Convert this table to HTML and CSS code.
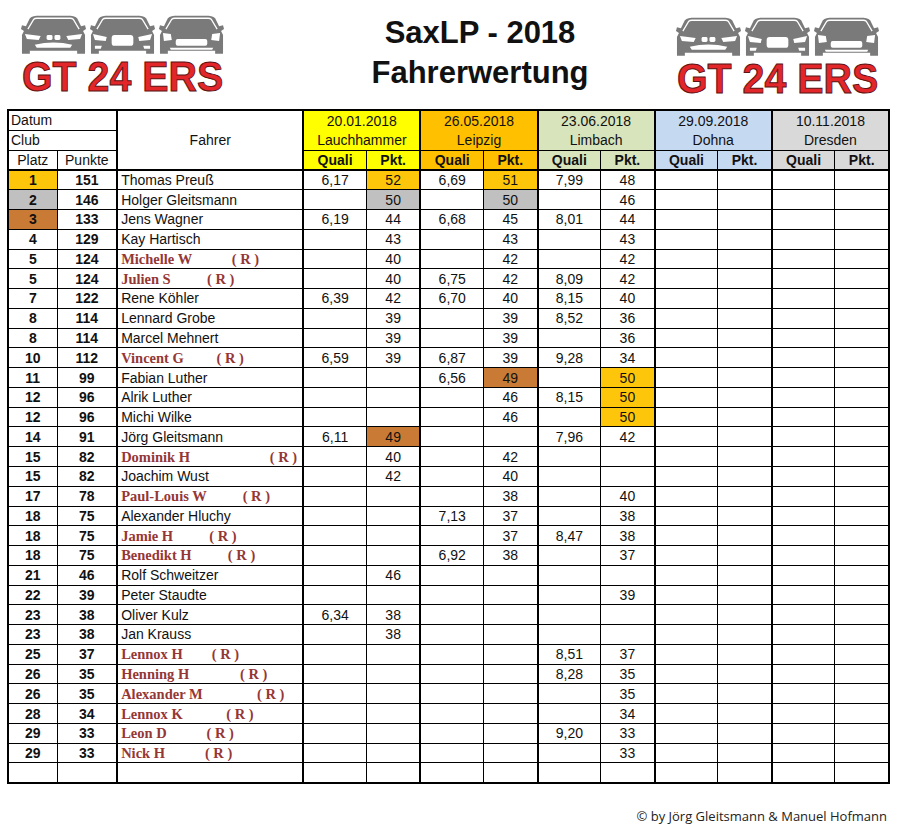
FILE: index.html
```html
<!DOCTYPE html>
<html lang="de">
<head>
<meta charset="utf-8">
<title>SaxLP - 2018 Fahrerwertung</title>
<link rel="stylesheet" href="styles.css">
</head>
<body>
<header class="top">
  <div class="logo">
    <div class="cars">
      <svg class="car" viewBox="0 0 68 40"><path class="body" d="M10,3 C12,1 15,0.5 20,0.5 L48,0.5 C53,0.5 56,1 58,3 L62,11 L66,10 L67,14 L64,16 L66,20 L66,39 L58,39 L58,36 L10,36 L10,39 L2,39 L2,20 L4,16 L1,14 L2,10 L6,11 Z"/><path class="line" d="M8,14 L14,4 Q15,3 17,3 L51,3 Q53,3 54,4 L60,14"/><path class="fill" d="M5,19 L21,21 L19,25 L7,24 Z M63,19 L47,21 L49,25 L61,24 Z"/><rect class="fill" x="27" y="20" width="6" height="5" rx="1.5"/><rect class="fill" x="35" y="20" width="6" height="5" rx="1.5"/><path class="fill" d="M15,30 Q34,25 53,30 L51,33 L17,33 Z"/></svg>
      <svg class="car" viewBox="0 0 68 40"><path class="body" d="M10,3 C12,1 15,0.5 20,0.5 L48,0.5 C53,0.5 56,1 58,3 L62,11 L66,10 L67,14 L64,16 L66,20 L66,39 L58,39 L58,36 L10,36 L10,39 L2,39 L2,20 L4,16 L1,14 L2,10 L6,11 Z"/><path class="line" d="M8,14 L14,4 Q15,3 17,3 L51,3 Q53,3 54,4 L60,14"/><path class="fill" d="M4,19 L18,22 L17,26 L6,25 Z M64,19 L50,22 L51,26 L62,25 Z"/><rect class="fill" x="23" y="20" width="22" height="11" rx="3"/><path class="fill" d="M6,31 L13,31 L12,34 L6,34 Z M62,31 L55,31 L56,34 L62,34 Z"/></svg>
      <svg class="car" viewBox="0 0 68 40"><path class="body" d="M10,3 C12,1 15,0.5 20,0.5 L48,0.5 C53,0.5 56,1 58,3 L62,11 L66,10 L67,14 L64,16 L66,20 L66,39 L58,39 L58,36 L10,36 L10,39 L2,39 L2,20 L4,16 L1,14 L2,10 L6,11 Z"/><path class="line" d="M8,14 L14,4 Q15,3 17,3 L51,3 Q53,3 54,4 L60,14"/><path class="fill" d="M5,18 L13,19 L14,25 L6,26 Z M63,18 L55,19 L54,25 L62,26 Z"/><rect class="fill" x="18" y="24" width="32" height="7" rx="2"/><path class="fill" d="M12,33 L56,33 L55,35 L13,35 Z"/></svg>
    </div>
    <div class="brand">GT 24 ERS</div>
  </div>
  <div class="title">
    <div>SaxLP - 2018</div>
    <div>Fahrerwertung</div>
  </div>
  <div class="logo logo-r">
    <div class="cars">
      <svg class="car" viewBox="0 0 68 40"><path class="body" d="M10,3 C12,1 15,0.5 20,0.5 L48,0.5 C53,0.5 56,1 58,3 L62,11 L66,10 L67,14 L64,16 L66,20 L66,39 L58,39 L58,36 L10,36 L10,39 L2,39 L2,20 L4,16 L1,14 L2,10 L6,11 Z"/><path class="line" d="M8,14 L14,4 Q15,3 17,3 L51,3 Q53,3 54,4 L60,14"/><path class="fill" d="M5,19 L21,21 L19,25 L7,24 Z M63,19 L47,21 L49,25 L61,24 Z"/><rect class="fill" x="27" y="20" width="6" height="5" rx="1.5"/><rect class="fill" x="35" y="20" width="6" height="5" rx="1.5"/><path class="fill" d="M15,30 Q34,25 53,30 L51,33 L17,33 Z"/></svg>
      <svg class="car" viewBox="0 0 68 40"><path class="body" d="M10,3 C12,1 15,0.5 20,0.5 L48,0.5 C53,0.5 56,1 58,3 L62,11 L66,10 L67,14 L64,16 L66,20 L66,39 L58,39 L58,36 L10,36 L10,39 L2,39 L2,20 L4,16 L1,14 L2,10 L6,11 Z"/><path class="line" d="M8,14 L14,4 Q15,3 17,3 L51,3 Q53,3 54,4 L60,14"/><path class="fill" d="M4,19 L18,22 L17,26 L6,25 Z M64,19 L50,22 L51,26 L62,25 Z"/><rect class="fill" x="23" y="20" width="22" height="11" rx="3"/><path class="fill" d="M6,31 L13,31 L12,34 L6,34 Z M62,31 L55,31 L56,34 L62,34 Z"/></svg>
      <svg class="car" viewBox="0 0 68 40"><path class="body" d="M10,3 C12,1 15,0.5 20,0.5 L48,0.5 C53,0.5 56,1 58,3 L62,11 L66,10 L67,14 L64,16 L66,20 L66,39 L58,39 L58,36 L10,36 L10,39 L2,39 L2,20 L4,16 L1,14 L2,10 L6,11 Z"/><path class="line" d="M8,14 L14,4 Q15,3 17,3 L51,3 Q53,3 54,4 L60,14"/><path class="fill" d="M5,18 L13,19 L14,25 L6,26 Z M63,18 L55,19 L54,25 L62,26 Z"/><rect class="fill" x="18" y="24" width="32" height="7" rx="2"/><path class="fill" d="M12,33 L56,33 L55,35 L13,35 Z"/></svg>
    </div>
    <div class="brand">GT 24 ERS</div>
  </div>
</header>

<table class="sheet">
  <colgroup>
    <col class="c-platz"><col class="c-punkte"><col class="c-name">
    <col class="c-q"><col class="c-p"><col class="c-q"><col class="c-p"><col class="c-q"><col class="c-p"><col class="c-q"><col class="c-p"><col class="c-q"><col class="c-p">
  </colgroup>
  <thead>
    <tr class="hr">
      <td colspan="2" class="lbl">Datum</td>
      <td rowspan="3" class="fahrer grp">Fahrer</td>
      <td colspan="2" class="ev1 grp d">20.01.2018</td>
      <td colspan="2" class="ev2 grp d">26.05.2018</td>
      <td colspan="2" class="ev3 grp d">23.06.2018</td>
      <td colspan="2" class="ev4 grp d">29.09.2018</td>
      <td colspan="2" class="ev5 grp d">10.11.2018</td>
    </tr>
    <tr class="hr">
      <td colspan="2" class="lbl">Club</td>
      <td colspan="2" class="ev1 grp c">Lauchhammer</td>
      <td colspan="2" class="ev2 grp c">Leipzig</td>
      <td colspan="2" class="ev3 grp c">Limbach</td>
      <td colspan="2" class="ev4 grp c">Dohna</td>
      <td colspan="2" class="ev5 grp c">Dresden</td>
    </tr>
    <tr class="hr last">
      <td>Platz</td>
      <td>Punkte</td>
      <td class="ev1 grp b">Quali</td><td class="ev1 b">Pkt.</td>
      <td class="ev2 grp b">Quali</td><td class="ev2 b">Pkt.</td>
      <td class="ev3 grp b">Quali</td><td class="ev3 b">Pkt.</td>
      <td class="ev4 grp b">Quali</td><td class="ev4 b">Pkt.</td>
      <td class="ev5 grp b">Quali</td><td class="ev5 b">Pkt.</td>
    </tr>
  </thead>
  <tbody>
    <tr><td class="gold">1</td><td>151</td><td>Thomas Preuß</td><td>6,17</td><td class="gold">52</td><td>6,69</td><td class="gold">51</td><td>7,99</td><td>48</td><td></td><td></td><td></td><td></td></tr>
    <tr><td class="silver">2</td><td>146</td><td>Holger Gleitsmann</td><td></td><td class="silver">50</td><td></td><td class="silver">50</td><td></td><td>46</td><td></td><td></td><td></td><td></td></tr>
    <tr><td class="bronze">3</td><td>133</td><td>Jens Wagner</td><td>6,19</td><td>44</td><td>6,68</td><td>45</td><td>8,01</td><td>44</td><td></td><td></td><td></td><td></td></tr>
    <tr><td>4</td><td>129</td><td>Kay Hartisch</td><td></td><td>43</td><td></td><td>43</td><td></td><td>43</td><td></td><td></td><td></td><td></td></tr>
    <tr><td>5</td><td>124</td><td><span class="rk">Michelle W           ( R )</span></td><td></td><td>40</td><td></td><td>42</td><td></td><td>42</td><td></td><td></td><td></td><td></td></tr>
    <tr><td>5</td><td>124</td><td><span class="rk">Julien S          ( R )</span></td><td></td><td>40</td><td>6,75</td><td>42</td><td>8,09</td><td>42</td><td></td><td></td><td></td><td></td></tr>
    <tr><td>7</td><td>122</td><td>Rene Köhler</td><td>6,39</td><td>42</td><td>6,70</td><td>40</td><td>8,15</td><td>40</td><td></td><td></td><td></td><td></td></tr>
    <tr><td>8</td><td>114</td><td>Lennard Grobe</td><td></td><td>39</td><td></td><td>39</td><td>8,52</td><td>36</td><td></td><td></td><td></td><td></td></tr>
    <tr><td>8</td><td>114</td><td>Marcel Mehnert</td><td></td><td>39</td><td></td><td>39</td><td></td><td>36</td><td></td><td></td><td></td><td></td></tr>
    <tr><td>10</td><td>112</td><td><span class="rk">Vincent G         ( R )</span></td><td>6,59</td><td>39</td><td>6,87</td><td>39</td><td>9,28</td><td>34</td><td></td><td></td><td></td><td></td></tr>
    <tr><td>11</td><td>99</td><td>Fabian Luther</td><td></td><td></td><td>6,56</td><td class="bronze">49</td><td></td><td class="gold">50</td><td></td><td></td><td></td><td></td></tr>
    <tr><td>12</td><td>96</td><td>Alrik Luther</td><td></td><td></td><td></td><td>46</td><td>8,15</td><td class="gold">50</td><td></td><td></td><td></td><td></td></tr>
    <tr><td>12</td><td>96</td><td>Michi Wilke</td><td></td><td></td><td></td><td>46</td><td></td><td class="gold">50</td><td></td><td></td><td></td><td></td></tr>
    <tr><td>14</td><td>91</td><td>Jörg Gleitsmann</td><td>6,11</td><td class="bronze">49</td><td></td><td></td><td>7,96</td><td>42</td><td></td><td></td><td></td><td></td></tr>
    <tr><td>15</td><td>82</td><td><span class="rk">Dominik H                      ( R )</span></td><td></td><td>40</td><td></td><td>42</td><td></td><td></td><td></td><td></td><td></td><td></td></tr>
    <tr><td>15</td><td>82</td><td>Joachim Wust</td><td></td><td>42</td><td></td><td>40</td><td></td><td></td><td></td><td></td><td></td><td></td></tr>
    <tr><td>17</td><td>78</td><td><span class="rk">Paul-Louis W          ( R )</span></td><td></td><td></td><td></td><td>38</td><td></td><td>40</td><td></td><td></td><td></td><td></td></tr>
    <tr><td>18</td><td>75</td><td>Alexander Hluchy</td><td></td><td></td><td>7,13</td><td>37</td><td></td><td>38</td><td></td><td></td><td></td><td></td></tr>
    <tr><td>18</td><td>75</td><td><span class="rk">Jamie H          ( R )</span></td><td></td><td></td><td></td><td>37</td><td>8,47</td><td>38</td><td></td><td></td><td></td><td></td></tr>
    <tr><td>18</td><td>75</td><td><span class="rk">Benedikt H          ( R )</span></td><td></td><td></td><td>6,92</td><td>38</td><td></td><td>37</td><td></td><td></td><td></td><td></td></tr>
    <tr><td>21</td><td>46</td><td>Rolf Schweitzer</td><td></td><td>46</td><td></td><td></td><td></td><td></td><td></td><td></td><td></td><td></td></tr>
    <tr><td>22</td><td>39</td><td>Peter Staudte</td><td></td><td></td><td></td><td></td><td></td><td>39</td><td></td><td></td><td></td><td></td></tr>
    <tr><td>23</td><td>38</td><td>Oliver Kulz</td><td>6,34</td><td>38</td><td></td><td></td><td></td><td></td><td></td><td></td><td></td><td></td></tr>
    <tr><td>23</td><td>38</td><td>Jan Krauss</td><td></td><td>38</td><td></td><td></td><td></td><td></td><td></td><td></td><td></td><td></td></tr>
    <tr><td>25</td><td>37</td><td><span class="rk">Lennox H        ( R )</span></td><td></td><td></td><td></td><td></td><td>8,51</td><td>37</td><td></td><td></td><td></td><td></td></tr>
    <tr><td>26</td><td>35</td><td><span class="rk">Henning H              ( R )</span></td><td></td><td></td><td></td><td></td><td>8,28</td><td>35</td><td></td><td></td><td></td><td></td></tr>
    <tr><td>26</td><td>35</td><td><span class="rk">Alexander M               ( R )</span></td><td></td><td></td><td></td><td></td><td></td><td>35</td><td></td><td></td><td></td><td></td></tr>
    <tr><td>28</td><td>34</td><td><span class="rk">Lennox K            ( R )</span></td><td></td><td></td><td></td><td></td><td></td><td>34</td><td></td><td></td><td></td><td></td></tr>
    <tr><td>29</td><td>33</td><td><span class="rk">Leon D           ( R )</span></td><td></td><td></td><td></td><td></td><td>9,20</td><td>33</td><td></td><td></td><td></td><td></td></tr>
    <tr><td>29</td><td>33</td><td><span class="rk">Nick H           ( R )</span></td><td></td><td></td><td></td><td></td><td></td><td>33</td><td></td><td></td><td></td><td></td></tr>
    <tr><td></td><td></td><td></td><td></td><td></td><td></td><td></td><td></td><td></td><td></td><td></td><td></td><td></td></tr>
  </tbody>
</table>

<footer class="foot">© by Jörg Gleitsmann &amp; Manuel Hofmann</footer>
</body>
</html>
```

FILE: styles.css
```css
html, body {
  margin: 0;
  padding: 0;
  background: #fff;
}
body {
  width: 900px;
  font-family: "Liberation Sans", Arial, sans-serif;
  color: #000;
}

/* ---------- header ---------- */
.top {
  display: flex;
  height: 109px;
}
.logo {
  width: 205px;
  margin-left: 20px;
  padding-top: 15px;
}
.logo-r {
  margin-left: 0;
  margin-right: 20px;
  padding-top: 17px;
}
.cars {
  display: flex;
  gap: 2px;
  height: 40px;
}
.car {
  width: 67px;
  height: 40px;
  display: block;
}
.car .body { fill: #7a7a7a; }
.car .line { fill: none; stroke: #fff; stroke-width: 1.3; }
.car .fill { fill: #fff; }
.brand {
  margin-top: 1px;
  font-family: "Liberation Sans", Arial, sans-serif;
  font-weight: bold;
  font-size: 43px;
  line-height: 40px;
  color: #e3262a;
  -webkit-text-stroke: 1px #5e1212;
  white-space: nowrap;
  transform: scaleX(0.915);
  transform-origin: left center;
  margin-left: 2px;
}
.title {
  flex: 1;
  padding-left: 60px;
  padding-top: 13px;
  text-align: center;
  font-weight: bold;
  font-size: 31px;
  line-height: 40px;
  color: #111;
}

/* ---------- table ---------- */
.sheet {
  border-collapse: collapse;
  table-layout: fixed;
  width: 883px;
  margin-left: 7px;
  border: 2px solid #000;
  font-family: "Liberation Sans", Arial, sans-serif;
  font-size: 14px;
}
.c-platz { width: 49px; }
.c-punkte { width: 60px; }
.c-name { width: 186px; }
.c-q { width: 63px; }
.c-p { width: 54px; }

.sheet td {
  border: 1px solid #000;
  padding: 0;
  text-align: center;
  vertical-align: middle;
  white-space: nowrap;
  overflow: hidden;
  line-height: 16px;
  color: #111;
}
.hr { height: 20px; }
.hr.last td { border-bottom: 2px solid #000; }
.lbl { text-align: left !important; padding-left: 2px !important; }
.fahrer { border-bottom: 2px solid #000 !important; }
.grp { border-left: 2px solid #000 !important; }
.d { border-bottom: none !important; }
.c { border-top: none !important; }
.b { font-weight: bold; }

.ev1 { background: #ffff00; }
.ev2 { background: #ffc000; }
.ev3 { background: #d8e4bc; }
.ev4 { background: #c5d9f1; }
.ev5 { background: #d9d9d9; }

.sheet tbody tr { height: 19.77px; }
.sheet tbody td:nth-child(1),
.sheet tbody td:nth-child(2) { font-weight: bold; }
.sheet tbody td:nth-child(3) {
  text-align: left;
  padding-left: 3px;
  border-left: 2px solid #000;
}
.sheet tbody td:nth-child(4),
.sheet tbody td:nth-child(6),
.sheet tbody td:nth-child(8),
.sheet tbody td:nth-child(10),
.sheet tbody td:nth-child(12) { border-left: 2px solid #000; }

.gold { background: #fec60a; }
.silver { background: #c0c0c0; }
.bronze { background: #c97b35; }

.rk {
  font-family: "Liberation Serif", "Times New Roman", serif;
  font-weight: bold;
  font-size: 14.5px;
  color: #953735;
  white-space: pre;
}

/* ---------- footer ---------- */
.foot {
  width: 887px;
  margin-top: 23px;
  text-align: right;
  font-family: "Open Sans", sans-serif;
  font-size: 13px;
  color: #222;
}
```
